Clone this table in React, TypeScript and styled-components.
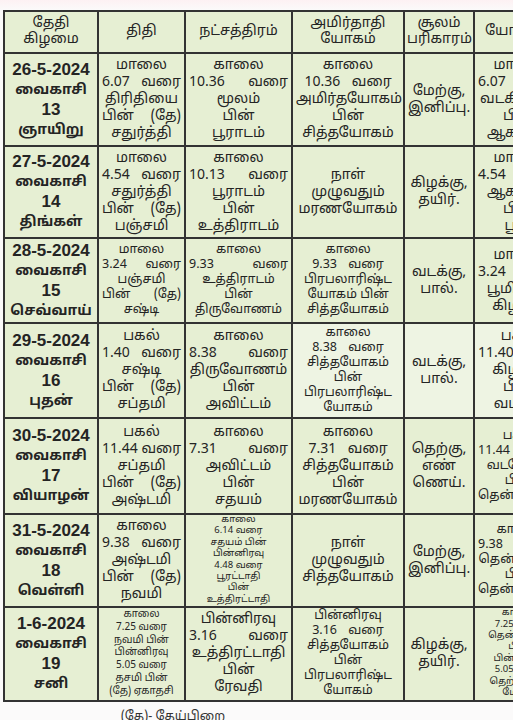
import styled, { createGlobalStyle } from 'styled-components';

const GlobalStyle = createGlobalStyle`
  html, body {
    margin: 0;
    padding: 0;
    background: #fbf8f8;
    overflow: hidden;
  }
  body {
    width: 513px;
    height: 720px;
  }
`;

const Page = styled.div`
  width: 513px;
  height: 720px;
  overflow: hidden;
  padding: 10px 0 0 3px;
  box-sizing: border-box;
  background: linear-gradient(180deg, #fdf1f3 0px, #fbfafa 10px, #fbfafa 100%);
`;

const Table = styled.table`
  border-collapse: collapse;
  table-layout: fixed;
  width: 560px;
  background: #e6efd3;
  color: #242424;
  font-family: 'Noto Sans Tamil', 'Lohit Tamil', 'Noto Sans', sans-serif;
`;

const HeadCell = styled.th`
  border: 2px solid #333;
  height: 40px;
  padding: 0 2px;
  font-weight: 400;
  font-size: 14px;
  line-height: 16px;
  text-align: center;
  vertical-align: middle;
  white-space: nowrap;
  overflow: hidden;
`;

const DateCell = styled.td`
  border: 2px solid #333;
  padding: 0 2px;
  text-align: center;
  vertical-align: middle;
  font-family: 'Liberation Sans', 'Noto Sans Tamil', sans-serif;
  font-weight: 700;
  font-size: 17px;
  line-height: 19px;
  white-space: nowrap;
`;

const TamilDay = styled.span`
  font-family: 'Noto Sans Tamil', 'Lohit Tamil', sans-serif;
  font-size: 14px;
`;

type Size = 'md' | 'sm' | 'xs' | 'tiny';

const fontSizes: Record<Size, string> = { md: '14px', sm: '12.5px', xs: '10px', tiny: '9.5px' };
const lineHeights: Record<Size, string> = { md: '17px', sm: '15px', xs: '12.8px', tiny: '11.4px' };

const Cell = styled.td<{ $size: Size; $light?: boolean }>`
  border: 2px solid #333;
  padding: 0 3px;
  text-align: center;
  vertical-align: middle;
  white-space: nowrap;
  overflow: hidden;
  background: ${p => (p.$light ? '#eef4e3' : 'transparent')};
  font-size: ${p => fontSizes[p.$size]};
  line-height: ${p => lineHeights[p.$size]};
`;

const Line = styled.div<{ $spread?: boolean; $gap?: boolean }>`
  text-align: ${p => (p.$spread ? 'justify' : 'center')};
  text-align-last: ${p => (p.$spread ? 'justify' : 'center')};
  word-spacing: ${p => (p.$gap ? '8px' : 'normal')};
`;

const Row = styled.tr<{ $h: number }>`
  height: ${p => p.$h}px;
`;

const Footer = styled.div`
  width: 340px;
  text-align: center;
  padding-top: 7px;
  font-family: 'Noto Sans Tamil', 'Lohit Tamil', 'Noto Sans', sans-serif;
  font-size: 12.5px;
  color: #333;
`;

type CellData = { lines: string[]; size?: Size; light?: boolean };

interface DayRow {
  h: number;
  date: string;
  day: string;
  num: string;
  cells: CellData[];
}

// which columns stretch "x வரை" lines edge to edge, which only widen the gap
const spreadCols = [true, true, false, false, true];

const rows: DayRow[] = [
  {
    h: 93,
    date: '26-5-2024',
    num: '13',
    day: 'ஞாயிறு',
    cells: [
      { lines: ['மாலை', '6.07 வரை', 'திரிதியை', 'பின் (தே)', 'சதுர்த்தி'] },
      { lines: ['காலை', '10.36 வரை', 'மூலம்', 'பின்', 'பூராடம்'] },
      { lines: ['காலை', '10.36 வரை', 'அமிர்தயோகம்', 'பின்', 'சித்தயோகம்'] },
      { lines: ['மேற்கு,', 'இனிப்பு.'] },
      { lines: ['மாலை', '6.07 வரை', 'வடகிழக்கு', 'பின்', 'ஆகாயம்'] },
    ],
  },
  {
    h: 92,
    date: '27-5-2024',
    num: '14',
    day: 'திங்கள்',
    cells: [
      { lines: ['மாலை', '4.54 வரை', 'சதுர்த்தி', 'பின் (தே)', 'பஞ்சமி'] },
      { lines: ['காலை', '10.13 வரை', 'பூராடம்', 'பின்', 'உத்திராடம்'] },
      { lines: ['நாள்', 'முழுவதும்', 'மரணயோகம்'] },
      { lines: ['கிழக்கு,', 'தயிர்.'] },
      { lines: ['மாலை', '4.54 வரை', 'ஆகாயம்', 'பின்', 'பூமி'] },
    ],
  },
  {
    h: 85,
    date: '28-5-2024',
    num: '15',
    day: 'செவ்வாய்',
    cells: [
      { lines: ['மாலை', '3.24 வரை', 'பஞ்சமி', 'பின் (தே)', 'சஷ்டி'], size: 'sm' },
      { lines: ['காலை', '9.33 வரை', 'உத்திராடம்', 'பின்', 'திருவோணம்'], size: 'sm' },
      { lines: ['காலை', '9.33 வரை', 'பிரபலாரிஷ்ட', 'யோகம் பின்', 'சித்தயோகம்'], size: 'sm' },
      { lines: ['வடக்கு,', 'பால்.'] },
      { lines: ['மாலை', '3.24 வரை', 'பூமி பின்', 'கிழக்கு'] },
    ],
  },
  {
    h: 95,
    date: '29-5-2024',
    num: '16',
    day: 'புதன்',
    cells: [
      { lines: ['பகல்', '1.40 வரை', 'சஷ்டி', 'பின் (தே)', 'சப்தமி'] },
      { lines: ['காலை', '8.38 வரை', 'திருவோணம்', 'பின்', 'அவிட்டம்'] },
      { lines: ['காலை', '8.38 வரை', 'சித்தயோகம்', 'பின்', 'பிரபலாரிஷ்ட', 'யோகம்'], size: 'sm', light: true },
      { lines: ['வடக்கு,', 'பால்.'], light: true },
      { lines: ['பகல்', '11.40 வரை', 'கிழக்கு', 'பின்', 'வடக்கு'], light: true },
    ],
  },
  {
    h: 96,
    date: '30-5-2024',
    num: '17',
    day: 'வியாழன்',
    cells: [
      { lines: ['பகல்', '11.44 வரை', 'சப்தமி', 'பின் (தே)', 'அஷ்டமி'] },
      { lines: ['காலை', '7.31 வரை', 'அவிட்டம்', 'பின்', 'சதயம்'] },
      { lines: ['காலை', '7.31 வரை', 'சித்தயோகம்', 'பின்', 'மரணயோகம்'] },
      { lines: ['தெற்கு,', 'எண்', 'ணெய்.'] },
      { lines: ['பகல்', '11.44 வரை', 'வடமேற்கு', 'பின்', 'தென்கிழக்கு'], size: 'sm' },
    ],
  },
  {
    h: 92,
    date: '31-5-2024',
    num: '18',
    day: 'வெள்ளி',
    cells: [
      { lines: ['காலை', '9.38 வரை', 'அஷ்டமி', 'பின் (தே)', 'நவமி'] },
      {
        lines: ['காலை', '6.14 வரை', 'சதயம் பின்', 'பின்னிரவு', '4.48 வரை', 'பூரட்டாதி', 'பின்', 'உத்திரட்டாதி'],
        size: 'tiny',
      },
      { lines: ['நாள்', 'முழுவதும்', 'சித்தயோகம்'] },
      { lines: ['மேற்கு,', 'இனிப்பு.'] },
      { lines: ['காலை', '9.38 வரை', 'தென்மேற்கு', 'பின்', 'தென்கிழக்கு'], size: 'sm' },
    ],
  },
  {
    h: 92,
    date: '1-6-2024',
    num: '19',
    day: 'சனி',
    cells: [
      {
        lines: ['காலை', '7.25 வரை', 'நவமி பின்', 'பின்னிரவு', '5.05 வரை', 'தசமி பின்', '(தே) ஏகாதசி'],
        size: 'xs',
      },
      { lines: ['பின்னிரவு', '3.16 வரை', 'உத்திரட்டாதி', 'பின்', 'ரேவதி'] },
      { lines: ['பின்னிரவு', '3.16 வரை', 'சித்தயோகம்', 'பின்', 'பிரபலாரிஷ்ட', 'யோகம்'], size: 'sm' },
      { lines: ['கிழக்கு,', 'தயிர்.'] },
      {
        lines: ['காலை', '7.25 வரை', 'தென்மேற்கு', 'பின்', 'பின்னிரவு', '5.05 வரை', 'தெற்கு பின்', 'மேற்கு'],
        size: 'tiny',
      },
    ],
  },
];

const isTimeLine = (l: string) => l.includes(' வரை') || l === 'பின் (தே)';

const Lines = ({ lines, size = 'md', spread = false }: { lines: string[]; size?: Size; spread?: boolean }) => {
  const big = size === 'md' || size === 'sm';
  return (
    <>
      {lines.map((l, i) => (
        <Line key={i} $spread={big && spread && isTimeLine(l)} $gap={big && !spread && isTimeLine(l)}>
          {l}
        </Line>
      ))}
    </>
  );
};

const App = () => {
  return (
    <>
      <GlobalStyle />
      <Page>
        <Table>
          <colgroup>
            <col style={{ width: 94 }} />
            <col style={{ width: 87 }} />
            <col style={{ width: 107 }} />
            <col style={{ width: 112 }} />
            <col style={{ width: 70 }} />
            <col style={{ width: 90 }} />
          </colgroup>
          <thead>
            <tr>
              <HeadCell>
                <Lines lines={['தேதி', 'கிழமை']} />
              </HeadCell>
              <HeadCell>திதி</HeadCell>
              <HeadCell>நட்சத்திரம்</HeadCell>
              <HeadCell>
                <Lines lines={['அமிர்தாதி', 'யோகம்']} />
              </HeadCell>
              <HeadCell>
                <Lines lines={['சூலம்', 'பரிகாரம்']} />
              </HeadCell>
              <HeadCell>யோகினி</HeadCell>
            </tr>
          </thead>
          <tbody>
            {rows.map(r => (
              <Row $h={r.h} key={r.date}>
                <DateCell>
                  <div>{r.date}</div>
                  <div>
                    <TamilDay>வைகாசி</TamilDay>
                  </div>
                  <div>{r.num}</div>
                  <div>
                    <TamilDay>{r.day}</TamilDay>
                  </div>
                </DateCell>
                {r.cells.map((c, i) => (
                  <Cell key={i} $size={c.size ?? 'md'} $light={c.light}>
                    <Lines lines={c.lines} size={c.size ?? 'md'} spread={spreadCols[i]} />
                  </Cell>
                ))}
              </Row>
            ))}
          </tbody>
        </Table>
        <Footer>(தே)- தேய்பிறை</Footer>
      </Page>
    </>
  );
};

export default App;
